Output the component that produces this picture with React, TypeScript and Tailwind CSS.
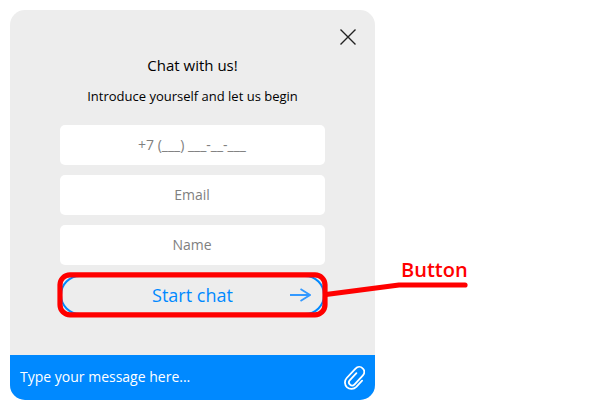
import React from "react";

const fields = ["+7 (___) ___-__-___", "Email", "Name"];

function CloseIcon() {
  return (
    <svg width="16" height="16" viewBox="0 0 16 16" fill="none" stroke="#222" strokeWidth="1.4">
      <path d="M.5.5l15 15M15.5.5l-15 15" />
    </svg>
  );
}

function ArrowIcon() {
  return (
    <svg width="21" height="14" viewBox="0 0 21 14" fill="none" stroke="#3399ff" strokeWidth="1.8">
      <path d="M0 7h19.5M10.5 1l9.5 6-9.5 6" />
    </svg>
  );
}

function ClipIcon() {
  return (
    <svg width="22" height="26" viewBox="0 0 22 26" fill="none" stroke="#fff" strokeWidth="1.8" strokeLinecap="round" strokeLinejoin="round">
      <path d="M19.1 15.6l-5.8 6.2c-2.6 2.6-6.6 2.8-9.2.5-2.7-2.5-2.9-6.6-.4-9.3l8.8-9.4c2-2.1 5.2-2.2 7.2-.3 2.1 1.9 2.1 5 .2 7.1l-8.3 8.9c-1.3 1.4-3.3 1.5-4.6.3-1.3-1.2-1.3-3.2-.1-4.5l6.5-7" />
    </svg>
  );
}

export default function App() {
  return (
    <main className="relative h-[410px] w-[600px] overflow-hidden bg-white p-[10px] font-['Open_Sans','Noto_Sans',sans-serif]">
      <section className="flex h-[390px] w-[365px] flex-col overflow-hidden rounded-[15px] bg-[#ededed]">
        <div className="flex h-[44px] shrink-0 items-start justify-end pt-[19px] pr-[19px]">
          <button aria-label="Close"><CloseIcon /></button>
        </div>
        <h1 className="h-[22px] text-center text-[15px] leading-[22px] text-black">Chat with us!</h1>
        <p className="mt-[11px] h-[18px] text-center text-[13px] leading-[18px] text-black">Introduce yourself and let us begin</p>
        <form className="mx-auto mt-[20px] flex w-[265px] flex-col gap-[10px]">
          {fields.map((label) => (
            <input key={label} placeholder={label} className="h-10 w-full rounded-[5px] bg-white pr-px pb-[2px] text-center text-[14px] placeholder:text-[#808080]" />
          ))}
          <button type="button" className="grid h-10 grid-cols-[1fr_auto_1fr] items-center rounded-[20px] border-2 border-[#0089ff] text-[18px] text-[#0089ff]">
            <span className="col-start-2">Start chat</span>
            <span className="justify-self-end pr-3"><ArrowIcon /></span>
          </button>
        </form>
        <footer className="mt-auto flex h-[45px] items-center justify-between bg-[#0089ff] pr-[10px] pl-[10px] text-[14px] text-white">
          <span className="pb-[2px]">Type your message here...</span>
          <ClipIcon />
        </footer>
      </section>
      <svg className="absolute inset-0" width="600" height="410" fill="none" stroke="#ff0000" strokeWidth="5.2" strokeLinecap="round" strokeLinejoin="round">
        <rect x="60" y="274.8" width="265" height="40" rx="10" />
        <path d="M326 294.5L399 285H465" />
      </svg>
      <span className="absolute top-[257px] left-[401px] text-[20px] leading-[26px] font-semibold text-[#ff0000]">Button</span>
    </main>
  );
}
